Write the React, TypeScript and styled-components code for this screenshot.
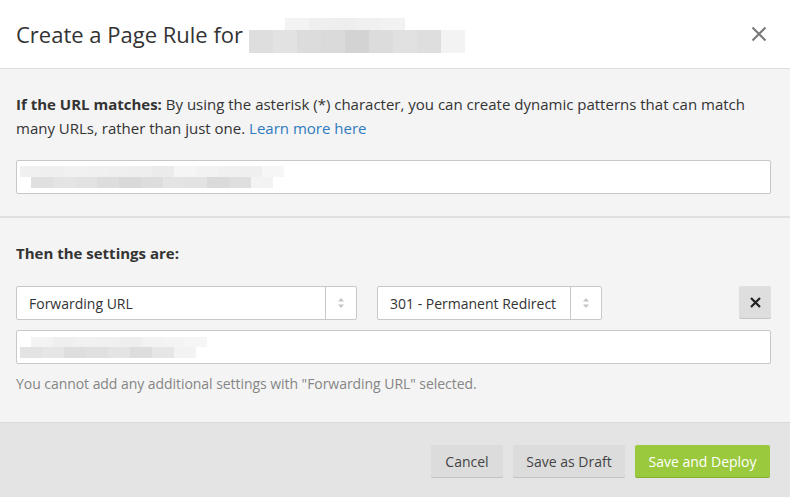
import {FC} from "react";
import styled, {createGlobalStyle} from "styled-components";

const GlobalStyle = createGlobalStyle`
    html, body {
        margin: 0;
        padding: 0;
        background: #fff;
    }
    body {
        font-family: "Open Sans", "Liberation Sans", sans-serif;
        color: #333;
    }
`;

// pixelated (redacted) text, drawn as rows of grey blocks
interface MosaicRow {
    offset: number
    height: number
    cells: string[]
}

interface MosaicProps {
    rows: MosaicRow[]
    cell: number
    className?: string
}

const MosaicBox = styled.div`
    display: flex;
    flex-direction: column;
`;

const MosaicLine = styled.div<{ $offset: number; $height: number }>`
    display: flex;
    padding-left: ${p => p.$offset}px;
    height: ${p => p.$height}px;
`;

const MosaicCell = styled.div<{ $w: number; $c: string }>`
    width: ${p => p.$w}px;
    height: 100%;
    background: ${p => p.$c};
`;

const Mosaic: FC<MosaicProps> = ({rows, cell, className}) => (
    <MosaicBox className={className}>
        {rows.map((row, i) => (
            <MosaicLine key={i} $offset={row.offset} $height={row.height}>
                {row.cells.map((c, j) => <MosaicCell key={j} $w={cell} $c={c}/>)}
            </MosaicLine>
        ))}
    </MosaicBox>
);

const Modal = styled.div`
    width: 790px;
    height: 497px;
    display: flex;
    flex-direction: column;
    background: #f4f4f4;
    overflow: hidden;
`;

const Header = styled.div`
    height: 68px;
    flex-shrink: 0;
    display: flex;
    align-items: center;
    padding: 0 22px 0 16px;
    background: #fff;
    border-bottom: 1px solid #dcdcdc;
`;

const Title = styled.h1`
    margin: 0;
    font-size: 22px;
    font-weight: 400;
    color: #333;
`;

const TitleMosaic = styled(Mosaic)`
    margin-left: 6px;
    margin-top: 2px;
`;

const CloseButton = styled.button`
    margin-left: auto;
    width: 18px;
    height: 18px;
    padding: 0;
    border: none;
    background: none;
    display: flex;
    align-items: center;
    justify-content: center;
    cursor: pointer;
`;

const Section = styled.div<{ $top: number; $bottom: number }>`
    padding: ${p => p.$top}px 19px ${p => p.$bottom}px 16px;
    display: flex;
    flex-direction: column;
`;

const Divider = styled.div`
    height: 2px;
    background: #e0e0e0;
    flex-shrink: 0;
`;

const Text = styled.p`
    margin: 0;
    font-size: 15px;
    line-height: 24px;
    color: #333;

    b {
        font-weight: 700;
    }

    a {
        color: #2f7bbf;
        text-decoration: none;
    }
`;

const Input = styled.div<{ $top: number }>`
    margin-top: ${p => p.$top}px;
    height: 34px;
    box-sizing: border-box;
    background: #fff;
    border: 1px solid #c8c8c8;
    border-radius: 2px;
    display: flex;
    align-items: center;
    padding-left: 3px;
`;

const SettingsRow = styled.div`
    margin-top: 21px;
    display: flex;
    gap: 20px;
    align-items: flex-start;
`;

const Select = styled.div<{ $width: number }>`
    width: ${p => p.$width}px;
    height: 34px;
    box-sizing: border-box;
    background: #fff;
    border: 1px solid #c8c8c8;
    border-radius: 2px;
    display: flex;
    align-items: stretch;
    font-size: 14px;
    color: #333;
`;

const SelectLabel = styled.span`
    flex: 1;
    display: flex;
    align-items: center;
    padding-left: 12px;
    white-space: nowrap;
`;

const SelectArrows = styled.span`
    width: 30px;
    border-left: 1px solid #c8c8c8;
    display: flex;
    align-items: center;
    justify-content: center;
`;

const RemoveButton = styled.button`
    margin-left: auto;
    width: 32px;
    height: 32px;
    padding: 0;
    border: none;
    border-radius: 2px;
    background: #dedede;
    box-shadow: 0 1px 0 #c4c4c4;
    display: flex;
    align-items: center;
    justify-content: center;
    cursor: pointer;
`;

const Note = styled.p`
    margin: 10px 0 0;
    font-size: 14px;
    line-height: 20px;
    letter-spacing: -0.05px;
    color: #858585;
`;

const Footer = styled.div`
    margin-top: auto;
    height: 75px;
    box-sizing: border-box;
    background: #e4e4e4;
    border-top: 1px solid #d8d8d8;
    display: flex;
    justify-content: flex-end;
    align-items: flex-start;
    gap: 10px;
    padding: 22px 20px 0;
`;

const Button = styled.button<{ $primary?: boolean; $width: number }>`
    width: ${p => p.$width}px;
    height: 32px;
    border: none;
    border-radius: 2px;
    font-family: "Open Sans", "Liberation Sans", sans-serif;
    font-size: 14px;
    padding: 0;
    cursor: pointer;
    color: ${p => p.$primary ? "#fff" : "#444"};
    background: ${p => p.$primary ? "#9bc93d" : "#dcdcdc"};
    box-shadow: 0 1px 0 ${p => p.$primary ? "#86b02f" : "#c2c2c2"};
`;

const ArrowsIcon = () => (
    <svg width="8" height="12" viewBox="0 0 8 12">
        <path d="M4 1 L7 4.5 H1 Z" fill="#c4c4c4"/>
        <path d="M4 11 L7 7.5 H1 Z" fill="#c4c4c4"/>
    </svg>
);

const titleRows: MosaicRow[] = [
    {offset: 36, height: 12, cells: ["#f3f3f3", "#efefef", "#eeeeee", "#f0f0f0", "#f2f2f2"]},
    {offset: 0, height: 23, cells: ["#dedede", "#e2e2e2", "#dcdcdc", "#dadada", "#d3d3d3", "#dcdcdc", "#e1e1e1", "#dedede", "#f3f3f3"]},
];

const urlRows: MosaicRow[] = [
    {offset: 0, height: 11, cells: ["#f0f0f0", "#efefef", "#f1f1f1", "#f0f0f0", "#efefef", "#eeeeee", "#ebebeb", "#f5f5f5", "#f2f2f2", "#f0f0f0", "#efefef", "#f6f6f6"]},
    {offset: 11, height: 11, cells: ["#e0e0e0", "#e4e4e4", "#e2e2e2", "#dddddd", "#d9d9d9", "#dddddd", "#e4e4e4", "#e3e3e3", "#dadada", "#dfdfdf", "#f3f3f3"]},
];

const forwardRows: MosaicRow[] = [
    {offset: 11, height: 10, cells: ["#f3f3f3", "#efefef", "#f1f1f1", "#f0f0f0", "#eeeeee", "#f2f2f2", "#f4f4f4", "#f6f6f6"]},
    {offset: 0, height: 11, cells: ["#e3e3e3", "#e6e6e6", "#dedede", "#e0e0e0", "#e4e4e4", "#dddddd", "#e6e6e6", "#f3f3f3"]},
];

export default function App() {
    return (
        <Modal>
            <GlobalStyle/>
            <Header>
                <Title>Create a Page Rule for</Title>
                <TitleMosaic rows={titleRows} cell={24}/>
                <CloseButton aria-label="Close">
                    <svg width="16" height="16" viewBox="0 0 16 16">
                        <path d="M1.5 1.5 L14.5 14.5 M14.5 1.5 L1.5 14.5" stroke="#777" strokeWidth="2"/>
                    </svg>
                </CloseButton>
            </Header>

            <Section $top={23} $bottom={22}>
                <Text>
                    <b>If the URL matches:</b> By using the asterisk (*) character, you can create dynamic patterns
                    that can match many URLs, rather than just one. <a href="#">Learn more here</a>
                </Text>
                <Input $top={20}>
                    <Mosaic rows={urlRows} cell={22}/>
                </Input>
            </Section>

            <Divider/>

            <Section $top={23} $bottom={0}>
                <Text><b>Then the settings are:</b></Text>
                <SettingsRow>
                    <Select $width={341}>
                        <SelectLabel>Forwarding URL</SelectLabel>
                        <SelectArrows><ArrowsIcon/></SelectArrows>
                    </Select>
                    <Select $width={225}>
                        <SelectLabel>301 - Permanent Redirect</SelectLabel>
                        <SelectArrows><ArrowsIcon/></SelectArrows>
                    </Select>
                    <RemoveButton aria-label="Remove">
                        <svg width="11" height="11" viewBox="0 0 11 11">
                            <path d="M1 1 L10 10 M10 1 L1 10" stroke="#222" strokeWidth="2.2"/>
                        </svg>
                    </RemoveButton>
                </SettingsRow>
                <Input $top={10}>
                    <Mosaic rows={forwardRows} cell={22}/>
                </Input>
                <Note>You cannot add any additional settings with "Forwarding URL" selected.</Note>
            </Section>

            <Footer>
                <Button $width={72}>Cancel</Button>
                <Button $width={112}>Save as Draft</Button>
                <Button $width={135} $primary>Save and Deploy</Button>
            </Footer>
        </Modal>
    );
}
